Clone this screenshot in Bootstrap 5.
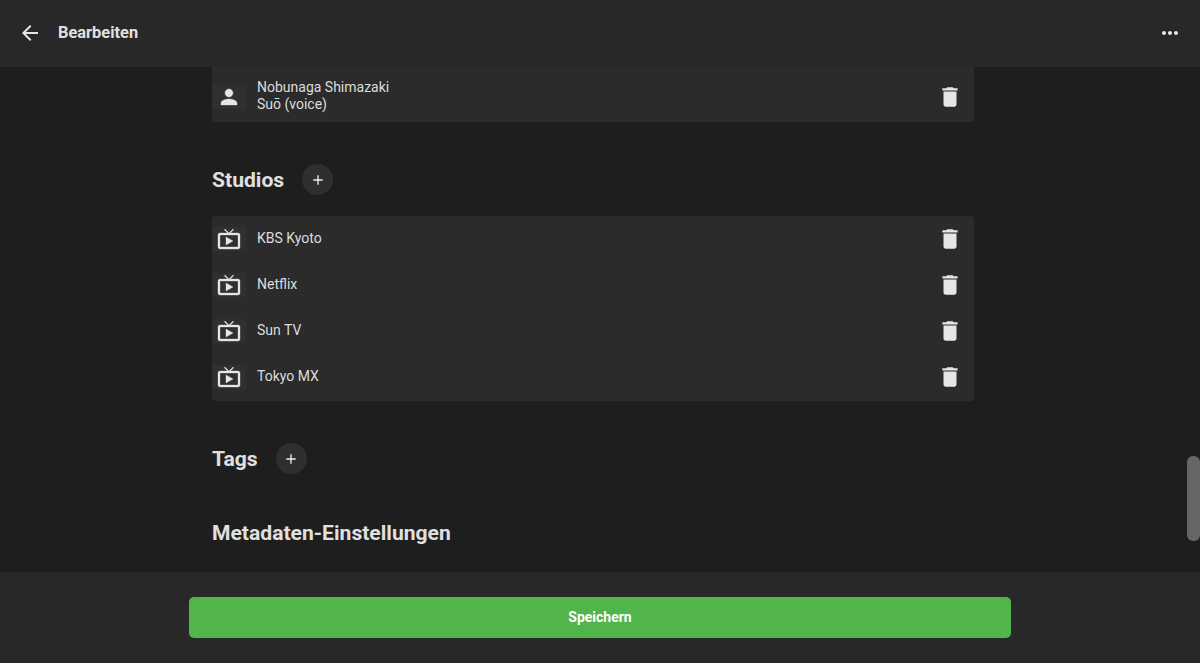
<!DOCTYPE html>
<html lang="de">
<head>
    <meta charset="UTF-8">
    <meta name="viewport" content="width=device-width, initial-scale=1">
    <title>Bearbeiten</title>
    <link href="https://cdn.jsdelivr.net/npm/bootstrap@5.3.2/dist/css/bootstrap.min.css" rel="stylesheet">
    <style>
        html, body { height: 100%; }
        body { background: #1e1e1e; color: #e0e0e0; font-family: Roboto, "Liberation Sans", sans-serif; font-size: 14px; overflow: hidden; }
        .app-head { position: relative; height: 67px; background: #282828; padding: 0 18px 2px 18px; flex-shrink: 0; }
        .app-head svg { fill: #e6e6e6; }
        .corner-spot { position: absolute; left: 0; top: 0; width: 2px; height: 2px; background: #5a1414; }
        .app-title { font-size: 16.4px; font-weight: 700; margin: 2px 0 0 16px; color: #e0e0e0; }
        .app-main { width: 762px; margin-left: 212px; }
        .app-view { position: relative; min-height: 0; }
        .item-box { background: #2b2b2b; border-radius: 4px; }
        .item-box.clipped { height: 55px; border-radius: 0 0 4px 4px; padding-top: 12px; }
        .item-row { height: 46px; }
        .item-box:not(.clipped) { padding-bottom: 1px; }
        .item-thumb { width: 34px; height: 24px; padding-left: .5px; background: #303030; display: flex; align-items: center; justify-content: center; flex-shrink: 0; }
        .item-thumb svg { fill: #e6e6e6; stroke: #e6e6e6; stroke-width: .35; }
        .item-text { margin-left: 11px; padding-bottom: 1px; line-height: 17px; color: #dcdcdc; }
        .item-del { margin-right: 11px; fill: #e6e6e6; }
        .sec-head { height: 31px; }
        .sec-title { font-size: 21.1px; font-weight: 700; line-height: 31px; margin: 0; color: #e0e0e0; }
        .round-add { width: 31px; height: 31px; border-radius: 50%; background: #2f2f2f; margin-left: 18px; border: 0; padding: 0; display: flex; align-items: center; justify-content: center; }
        .round-add svg { fill: #f0f0f0; }
        .gap-studios { margin-top: 42px; }
        .gap-list { margin-top: 21px; }
        .gap-meta { margin-top: 43px; }
        .fake-thumb { position: absolute; right: 0; top: 389px; width: 13px; height: 85px; background: #666; border-radius: 6px; }
        .app-foot { height: 91px; background: #282828; padding-top: 25px; flex-shrink: 0; }
        .save-btn { display: block; width: 822px; height: 41px; margin: 0 auto; background: #52b54b; border: 0; border-radius: 5px; color: #fff; font-size: 14px; font-weight: 700; }
    </style>
</head>
<body>
    <svg width="0" height="0" class="d-block position-absolute">
        <symbol id="i-person" viewBox="0 0 24 24"><path d="M12 12c2.210 0 4-1.790 4-4s-1.790-4-4-4-4 1.790-4 4 1.790 4 4 4zm0 2c-2.670 0-8 1.340-8 4v2h16v-2c0-2.660-5.330-4-8-4z"/></symbol>
        <symbol id="i-tv" viewBox="0 0 24 24"><path d="M21 6h-7.590l3.290-3.290L16 2l-4 4-4-4-.71.71L10.590 6H3c-1.100 0-2 .89-2 2v12c0 1.100.9 2 2 2h18c1.100 0 2-.9 2-2V8c0-1.110-.9-2-2-2zm0 14H3V8h18v12zM9 10v8l7-4z"/></symbol>
        <symbol id="i-del" viewBox="0 0 24 24"><path d="M6 19c0 1.100.9 2 2 2h8c1.100 0 2-.9 2-2V7H6v12zM19 4h-3.500l-1-1h-5l-1 1H5v2h14V4z"/></symbol>
        <symbol id="i-add" viewBox="0 0 24 24"><path d="M19 13h-6v6h-2v-6H5v-2h6V5h2v6h6v2z"/></symbol>
    </svg>
    <div class="d-flex flex-column h-100">
        <header class="app-head d-flex align-items-center">
            <span class="corner-spot"></span>
            <svg width="24" height="24" viewBox="0 0 24 24"><path d="M20 11H7.830l5.590-5.590L12 4l-8 8 8 8 1.410-1.410L7.830 13H20v-2z"/></svg>
            <span class="app-title">Bearbeiten</span>
            <svg class="ms-auto" width="24" height="24" viewBox="0 0 24 24"><path d="M6 10c-1.100 0-2 .9-2 2s.9 2 2 2 2-.9 2-2-.9-2-2-2zm12 0c-1.100 0-2 .9-2 2s.9 2 2 2 2-.9 2-2-.9-2-2-2zm-6 0c-1.100 0-2 .9-2 2s.9 2 2 2 2-.9 2-2-.9-2-2-2z"/></svg>
        </header>
        <div class="app-view flex-grow-1 overflow-hidden">
            <main class="app-main">
                <div class="item-box clipped">
                    <div class="d-flex align-items-center">
                        <div class="item-thumb"><svg width="24" height="24"><use href="#i-person"/></svg></div>
                        <div class="item-text flex-grow-1">Nobunaga Shimazaki<br>Suō (voice)</div>
                        <svg class="item-del" width="26" height="26"><use href="#i-del"/></svg>
                    </div>
                </div>

                <div class="sec-head d-flex align-items-center gap-studios">
                    <h2 class="sec-title">Studios</h2>
                    <button class="round-add"><svg width="16" height="16"><use href="#i-add"/></svg></button>
                </div>
                <div class="item-box gap-list">
                    <div class="item-row d-flex align-items-center">
                        <div class="item-thumb"><svg width="24" height="24"><use href="#i-tv"/></svg></div>
                        <div class="item-text flex-grow-1">KBS Kyoto</div>
                        <svg class="item-del" width="26" height="26"><use href="#i-del"/></svg>
                    </div>
                    <div class="item-row d-flex align-items-center">
                        <div class="item-thumb"><svg width="24" height="24"><use href="#i-tv"/></svg></div>
                        <div class="item-text flex-grow-1">Netflix</div>
                        <svg class="item-del" width="26" height="26"><use href="#i-del"/></svg>
                    </div>
                    <div class="item-row d-flex align-items-center">
                        <div class="item-thumb"><svg width="24" height="24"><use href="#i-tv"/></svg></div>
                        <div class="item-text flex-grow-1">Sun TV</div>
                        <svg class="item-del" width="26" height="26"><use href="#i-del"/></svg>
                    </div>
                    <div class="item-row d-flex align-items-center">
                        <div class="item-thumb"><svg width="24" height="24"><use href="#i-tv"/></svg></div>
                        <div class="item-text flex-grow-1">Tokyo MX</div>
                        <svg class="item-del" width="26" height="26"><use href="#i-del"/></svg>
                    </div>
                </div>

                <div class="sec-head d-flex align-items-center gap-studios">
                    <h2 class="sec-title">Tags</h2>
                    <button class="round-add"><svg width="16" height="16"><use href="#i-add"/></svg></button>
                </div>

                <div class="sec-head d-flex align-items-center gap-meta">
                    <h2 class="sec-title">Metadaten-Einstellungen</h2>
                </div>
            </main>
            <div class="fake-thumb"></div>
        </div>
        <footer class="app-foot">
            <button class="save-btn">Speichern</button>
        </footer>
    </div>
    <script src="https://cdn.jsdelivr.net/npm/bootstrap@5.3.2/dist/js/bootstrap.bundle.min.js"></script>
</body>
</html>
